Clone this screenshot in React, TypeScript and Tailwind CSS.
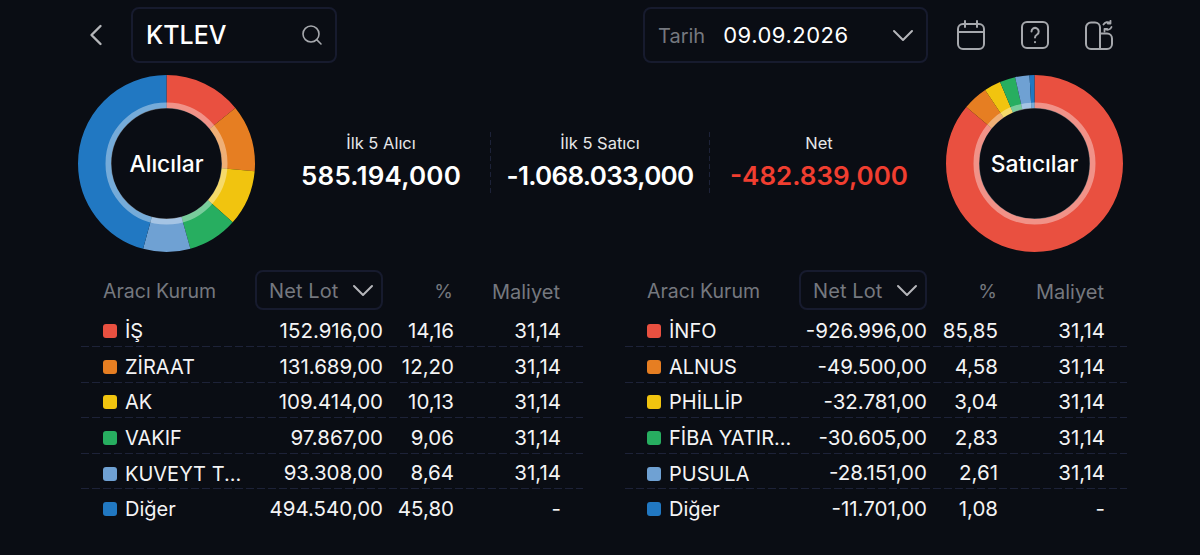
import React from "react";
import { ChevronLeft, Search } from "lucide-react";

interface Row {
  name: string;
  lot: string;
  pct: string;
  cost: string;
}

const COLORS = ["#e95040", "#e67e22", "#f1c40f", "#27ae60", "#6fa1d3", "#2178c2"];

const SWATCHES = [
  "bg-[#e95040]",
  "bg-[#e67e22]",
  "bg-[#f1c40f]",
  "bg-[#27ae60]",
  "bg-[#6fa1d3]",
  "bg-[#2178c2]",
];

const buyers: Row[] = [
  { name: "İŞ", lot: "152.916,00", pct: "14,16", cost: "31,14" },
  { name: "ZİRAAT", lot: "131.689,00", pct: "12,20", cost: "31,14" },
  { name: "AK", lot: "109.414,00", pct: "10,13", cost: "31,14" },
  { name: "VAKIF", lot: "97.867,00", pct: "9,06", cost: "31,14" },
  { name: "KUVEYT T...", lot: "93.308,00", pct: "8,64", cost: "31,14" },
  { name: "Diğer", lot: "494.540,00", pct: "45,80", cost: "-" },
];

const sellers: Row[] = [
  { name: "İNFO", lot: "-926.996,00", pct: "85,85", cost: "31,14" },
  { name: "ALNUS", lot: "-49.500,00", pct: "4,58", cost: "31,14" },
  { name: "PHİLLİP", lot: "-32.781,00", pct: "3,04", cost: "31,14" },
  { name: "FİBA YATIR...", lot: "-30.605,00", pct: "2,83", cost: "31,14" },
  { name: "PUSULA", lot: "-28.151,00", pct: "2,61", cost: "31,14" },
  { name: "Diğer", lot: "-11.701,00", pct: "1,08", cost: "-" },
];

function Chevron() {
  return (
    <svg viewBox="0 0 22 13" className="w-[22px] h-[13px] text-[#b5b6ba]" fill="none" stroke="currentColor" strokeWidth="2" strokeLinecap="round" strokeLinejoin="round">
      <path d="M2 2l9 9 9-9" />
    </svg>
  );
}

function Donut({ label, values }: { label: string; values: number[] }) {
  const total = values.reduce((a, b) => a + b, 0);
  let offset = 0;
  return (
    <div className="relative w-[177px] h-[177px] shrink-0">
      <svg viewBox="0 0 177 177" className="w-full h-full -rotate-90">
        {values.map((v, i) => {
          const outer = 2 * Math.PI * 72;
          const start = offset / total;
          const frac = v / total;
          offset += v;
          return (
            <circle
              key={i}
              cx="88.5"
              cy="88.5"
              r="72"
              fill="none"
              stroke={COLORS[i]}
              strokeWidth="33"
              strokeDasharray={`${frac * outer} ${outer}`}
              strokeDashoffset={-start * outer}
            />
          );
        })}
        <circle cx="88.5" cy="88.5" r="58" fill="none" stroke="#ffffff" strokeOpacity="0.38" strokeWidth="6" />
      </svg>
      <div className="absolute inset-0 flex items-center justify-center pt-[1px] text-white text-[22.8px] font-medium">
        {label}
      </div>
    </div>
  );
}

function Stat({
  label,
  value,
  valueClass,
}: {
  label: string;
  value: string;
  valueClass: string;
}) {
  return (
    <div className="w-[218px] h-[64px] flex flex-col items-center justify-center">
      <span className="text-[#e6e7e9] text-[16.5px] leading-[20px] -mt-[1px]">{label}</span>
      <span className={`text-[26px] leading-[36px] mt-[5px] font-semibold ${valueClass}`}>{value}</span>
    </div>
  );
}

function VDivider() {
  return (
    <div className="w-px h-[64px] bg-[repeating-linear-gradient(180deg,#1d2238_0_5px,transparent_5px_8px)]" />
  );
}

function BrokerTable({ rows }: { rows: Row[] }) {
  return (
    <div className="w-[502px]">
      <div className="grid grid-cols-[152px_128px_71px_107px] items-center h-[40px] pl-[22px] text-[#75787f]">
        <span className="pt-[4px] text-[19.5px]">Aracı Kurum</span>
        <div className="h-[40px] flex items-center justify-between pl-[12px] pr-[7px] border-2 border-[#171b2e] rounded-lg text-[20px]">
          <span className="tracking-[0.1px] pt-[1px]">Net Lot</span>
          <Chevron />
        </div>
        <span className="text-right pt-[4px] pr-[1px] text-[19px]">%</span>
        <span className="text-right pt-[4px] pr-[1px] text-[20px]">Maliyet</span>
      </div>
      <div className="mt-[1.5px]">
        {rows.map((r, i) => (
          <div key={r.name}>
            <div className="grid grid-cols-[152px_128px_71px_107px] items-center h-[35.6px] pt-[4px] pl-[22px] text-[#f4f4f5] text-[20px]">
              <div className="flex items-center gap-[8px] min-w-0">
                <span className={`w-[14px] h-[14px] rounded-[3px] shrink-0 ${SWATCHES[i]}`} />
                <span className="whitespace-nowrap">{r.name}</span>
              </div>
              <span className="text-right text-[20.5px]">{r.lot}</span>
              <span className="text-right text-[20.5px]">{r.pct}</span>
              <span className="text-right text-[20.5px]">{r.cost}</span>
            </div>
            {i < rows.length - 1 && (
              <div className="h-px -mt-px bg-[repeating-linear-gradient(90deg,#1d2238_0_8px,transparent_8px_11px)]" />
            )}
          </div>
        ))}
      </div>
    </div>
  );
}

export default function App() {
  return (
    <div
      className="w-[1200px] h-[555px] overflow-hidden bg-[#0a0d14] flex flex-col"
      style={{ fontFamily: "Inter, 'Noto Sans', sans-serif" }}
    >
      {/* Header */}
      <div className="flex items-center h-[56px] mt-[7px] pl-[81px]">
        <ChevronLeft size={36} strokeWidth={1.6} className="text-[#b5b6ba] -ml-[3px] -mr-[3px]" />
        <div className="ml-[20px] w-[206px] h-[56px] flex items-center justify-between pl-[13px] pr-[11px] border-2 border-[#171b2e] rounded-lg">
          <span className="text-white text-[25px] font-medium pt-[1px]">KTLEV</span>
          <Search size={24} strokeWidth={1.6} className="text-[#a6a8ad]" />
        </div>
        <div className="ml-[306px] w-[285px] h-[56px] flex items-center pl-[13px] pr-[12px] border-2 border-[#171b2e] rounded-lg">
          <span className="text-[#75787f] text-[20px] pt-[1px]">Tarih</span>
          <span className="ml-[18px] text-white text-[22px] tracking-[0.5px] pt-[1px]">09.09.2026</span>
          <span className="ml-auto">
            <Chevron />
          </span>
        </div>
        <svg viewBox="0 0 30 32" className="ml-[28px] w-[30px] h-[32px] text-[#a6a8ad]" fill="none" stroke="currentColor" strokeWidth="2" strokeLinecap="round">
          <rect x="2" y="5" width="26" height="25" rx="5" />
          <path d="M2 13h26M9 2v6M21 2v6" />
        </svg>
        <svg viewBox="0 0 30 30" className="ml-[34px] w-[30px] h-[30px] text-[#a6a8ad]" fill="none" stroke="currentColor" strokeWidth="2" strokeLinecap="round">
          <rect x="2" y="2" width="26" height="26" rx="5" />
          <path d="M11.500 11.500a3.600 3.600 0 1 1 5.600 3c-1.300.9-2.100 1.500-2.100 3" />
          <path d="M15 22v.2" />
        </svg>
        <svg viewBox="0 0 30 31" className="ml-[34px] w-[30px] h-[31px] text-[#a6a8ad]" fill="none" stroke="currentColor" strokeWidth="2" strokeLinecap="round" strokeLinejoin="round">
          <path d="M16 29H7a5 5 0 0 1-5-5V7.500a5 5 0 0 1 5-5h4a5 5 0 0 1 5 5z" />
          <path d="M16 13.500h7a5 5 0 0 1 5 5V24a5 5 0 0 1-5 5h-7" />
          <path d="M19.500 4.500c1.500-2.500 4.500-3 6.500-1.500M26.500.8v2.700h-2.700M27.500 7c-1 2.500-4 3.500-6 2M20.500 11.500V8.800h2.700" strokeWidth="1.800" />
        </svg>
      </div>

      {/* Summary */}
      <div className="flex items-center mt-[12px] pl-[78px]">
        <Donut label="Alıcılar" values={[14.16, 12.2, 10.13, 9.06, 8.64, 45.8]} />
        <div className="ml-[17px] flex">
          <Stat label="İlk 5 Alıcı" value="585.194,000" valueClass="text-white tracking-[0.2px]" />
          <VDivider />
          <Stat label="İlk 5 Satıcı" value="-1.068.033,000" valueClass="text-white tracking-[-0.7px]" />
          <VDivider />
          <Stat label="Net" value="-482.839,000" valueClass="text-[#f03e30]" />
        </div>
        <div className="ml-[18px]">
          <Donut label="Satıcılar" values={[85.85, 4.58, 3.04, 2.83, 2.61, 1.08]} />
        </div>
      </div>

      {/* Tables */}
      <div className="flex mt-[18px] pl-[81px] gap-[42px]">
        <BrokerTable rows={buyers} />
        <BrokerTable rows={sellers} />
      </div>
    </div>
  );
}
